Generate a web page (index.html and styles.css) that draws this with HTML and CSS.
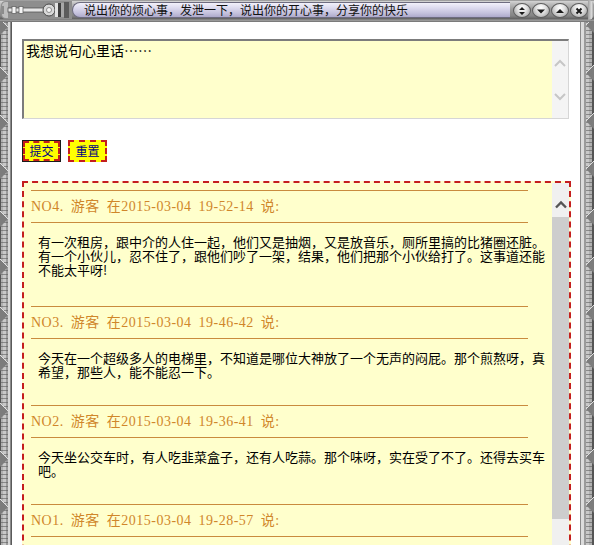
FILE: index.html
```html
<!DOCTYPE html>
<html lang="zh-CN">
<head>
<meta charset="utf-8">
<title>留言板</title>
<link rel="stylesheet" href="styles.css">
</head>
<body>
<div class="window">
  <div class="titlebar">
    <svg class="ornament" width="72" height="20" viewBox="0 0 72 20">
      <path d="M6 1 H72 V19 H6 Q1 19 1 14 V6 Q1 1 6 1 Z" fill="#8e8e8e"/>
      <path d="M6 2 Q2 2 2 6 V14 Q2 18 6 18 H8 V2 Z" fill="#bdbdbd"/>
      <path d="M3 6 V14" stroke="#5a5a5a" stroke-width="1"/>
      <rect x="8" y="8" width="38" height="4" fill="#e6e6e6" stroke="#555" stroke-width="0.8"/>
      <rect x="12" y="6.5" width="4" height="7" fill="#f4f4f4" stroke="#666" stroke-width="0.8"/>
      <rect x="19" y="6.5" width="4" height="7" fill="#f4f4f4" stroke="#666" stroke-width="0.8"/>
      <circle cx="49" cy="10" r="6" fill="#d8d8d8" stroke="#4a4a4a" stroke-width="1"/>
      <circle cx="49" cy="10" r="2.5" fill="#f6f6f6" stroke="#777" stroke-width="0.8"/>
      <rect x="55" y="3" width="3" height="14" fill="#e2e2e2"/>
      <rect x="58" y="3" width="3" height="14" fill="#3e3e3e"/>
      <rect x="61" y="3" width="3" height="14" fill="#a8a8a8"/>
      <rect x="64" y="2" width="5" height="16" fill="#5c5c5c"/>
    </svg>
    <div class="caption">说出你的烦心事，发泄一下，说出你的开心事，分享你的快乐</div>
    <div class="controls">
      <span class="ctl"><svg width="10" height="10" viewBox="0 0 10 10"><path d="M5 1 L8 4 H2 Z M5 9 L8 6 H2 Z" fill="#1a1a1a"/></svg></span>
      <span class="ctl"><svg width="10" height="10" viewBox="0 0 10 10"><path d="M1 3.5 H9 L5 7.5 Z" fill="#1a1a1a"/></svg></span>
      <span class="ctl"><svg width="10" height="10" viewBox="0 0 10 10"><path d="M1 7 H9 L5 3 Z" fill="#1a1a1a"/></svg></span>
      <span class="ctl"><svg width="10" height="10" viewBox="0 0 10 10"><path d="M2.5 2.5 L7.5 7.5 M7.5 2.5 L2.5 7.5" stroke="#1a1a1a" stroke-width="2"/></svg></span>
    </div>
    <span class="endcap"></span>
  </div>

  <div class="frame">
    <svg class="side side-left" width="12" height="523" viewBox="0 0 12 523">
      <defs>
        <pattern id="grilleL" width="12" height="4" patternUnits="userSpaceOnUse">
          <rect x="0" y="0" width="8" height="1" fill="#555" opacity="0.55"/>
        </pattern>
        <pattern id="notchL" width="12" height="48" y="45" patternUnits="userSpaceOnUse">
          <polygon points="0,0 8,8 0,16" fill="#7c7c7c"/>
          <polyline points="0,0 8,8" stroke="#e0e0e0" stroke-width="1" fill="none"/>
        </pattern>
      </defs>
      <rect x="0" y="0" width="1" height="523" fill="#555"/>
      <rect x="1" y="0" width="2" height="523" fill="#b0b0b0"/>
      <rect x="3" y="0" width="3" height="523" fill="#c8c8c8"/>
      <rect x="6" y="0" width="2" height="523" fill="#9a9a9a"/>
      <rect x="8" y="0" width="2" height="523" fill="#d8d8d8"/>
      <rect x="10" y="0" width="1" height="523" fill="#8a8a8a"/>
      <rect x="11" y="0" width="1" height="523" fill="#5a5a5a"/>
      <rect x="0" y="0" width="12" height="523" fill="url(#grilleL)"/>
      <rect x="0" y="0" width="12" height="523" fill="url(#notchL)"/>
    </svg>

    <div class="client">
      <div class="input-box">
        <textarea class="input">我想说句心里话……</textarea>
        <div class="vscroll">
          <svg class="chev chev-up" width="12" height="8" viewBox="0 0 12 8"><path d="M1 7 L6 2 L11 7" fill="none" stroke="#c6c6c6" stroke-width="2"/></svg>
          <svg class="chev chev-down" width="12" height="8" viewBox="0 0 12 8"><path d="M1 1 L6 6 L11 1" fill="none" stroke="#c6c6c6" stroke-width="2"/></svg>
        </div>
      </div>

      <div class="actions">
        <button class="btn btn-focus" type="button"><span class="btn-face">提交</span></button>
        <button class="btn" type="button"><span class="btn-face">重置</span></button>
      </div>

      <div class="board">
        <div class="messages">
          <div class="entry">
            <div class="entry-head">NO4. 游客 在2015-03-04 19-52-14 说:</div>
            <p class="entry-text entry-text-long">有一次租房，跟中介的人住一起，他们又是抽烟，又是放音乐，厕所里搞的比猪圈还脏。<br>有一个小伙儿，忍不住了，跟他们吵了一架，结果，他们把那个小伙给打了。这事道还能<br>不能太平呀!</p>
          </div>
          <div class="entry">
            <div class="entry-head">NO3. 游客 在2015-03-04 19-46-42 说:</div>
            <p class="entry-text">今天在一个超级多人的电梯里，不知道是哪位大神放了一个无声的闷屁。那个煎熬呀，真<br>希望，那些人，能不能忍一下。</p>
          </div>
          <div class="entry">
            <div class="entry-head">NO2. 游客 在2015-03-04 19-36-41 说:</div>
            <p class="entry-text">今天坐公交车时，有人吃韭菜盒子，还有人吃蒜。那个味呀，实在受了不了。还得去买车<br>吧。</p>
          </div>
          <div class="entry">
            <div class="entry-head">NO1. 游客 在2015-03-04 19-28-57 说:</div>
          </div>
        </div>
        <div class="board-scroll">
          <div class="sb-btn">
            <svg width="12" height="9" viewBox="0 0 12 9"><path d="M1 7.5 L6 2.5 L11 7.5" fill="none" stroke="#555" stroke-width="2.4"/></svg>
          </div>
          <div class="sb-thumb"></div>
          <div class="sb-track"></div>
        </div>
      </div>
    </div>

    <svg class="side side-right" width="14" height="523" viewBox="0 0 14 523">
      <defs>
        <pattern id="grilleR" width="14" height="4" patternUnits="userSpaceOnUse">
          <rect x="6" y="0" width="8" height="1" fill="#555" opacity="0.55"/>
        </pattern>
        <pattern id="notchR" width="14" height="48" y="43" patternUnits="userSpaceOnUse">
          <polygon points="14,0 6,8 14,16" fill="#7c7c7c"/>
          <polyline points="14,0 6,8" stroke="#e0e0e0" stroke-width="1" fill="none"/>
        </pattern>
      </defs>
      <rect x="0" y="0" width="1" height="523" fill="#8a8a8a"/>
      <rect x="1" y="0" width="3" height="523" fill="#dcdcdc"/>
      <rect x="4" y="0" width="2" height="523" fill="#9a9a9a"/>
      <rect x="6" y="0" width="3" height="523" fill="#c8c8c8"/>
      <rect x="9" y="0" width="3" height="523" fill="#b0b0b0"/>
      <rect x="12" y="0" width="2" height="523" fill="#555"/>
      <rect x="0" y="0" width="14" height="523" fill="url(#grilleR)"/>
      <rect x="0" y="0" width="14" height="523" fill="url(#notchR)"/>
    </svg>
  </div>
</div>
</body>
</html>
```

FILE: styles.css
```css
html, body {
  margin: 0;
  padding: 0;
  width: 594px;
  height: 545px;
  overflow: hidden;
  background: #ffffff;
}

body {
  font-family: "Noto Sans CJK SC", "DejaVu Sans", sans-serif;
  color: #000;
}

.window {
  width: 594px;
  height: 545px;
  display: flex;
  flex-direction: column;
  overflow: hidden;
}

/* ---------- title bar ---------- */
.titlebar {
  flex: none;
  height: 22px;
  display: flex;
  align-items: flex-start;
  background: linear-gradient(to bottom,
    #6a6a6a 0, #d4d4d4 1px, #bcbcbc 4px, #979797 10px,
    #838383 16px, #606060 19px, #a4a4a4 20px, #8c8c8c 21px, #6a6a6a 22px);
}

.ornament {
  flex: none;
  display: block;
}

.caption {
  flex: 1;
  margin: 2px 3px 0 0;
  height: 16px;
  box-sizing: border-box;
  padding-left: 11px;
  border: 1px solid #6e6c80;
  border-right: 0;
  border-radius: 8px 0 0 8px;
  background: linear-gradient(to bottom, #f2f1fa 0, #dcdaee 35%, #c6c3de 70%, #aeaacb 100%);
  font-size: 12px;
  line-height: 14px;
  color: #111;
  white-space: nowrap;
  overflow: hidden;
}

.controls {
  flex: none;
  display: flex;
  gap: 1px;
  margin-top: 3px;
}

.ctl {
  width: 18px;
  height: 15px;
  box-sizing: border-box;
  border-radius: 50%;
  border: 1px solid #5e5e5e;
  background: radial-gradient(ellipse at 50% 30%, #ffffff 0, #e2e2e2 40%, #a8a8a8 85%, #8a8a8a 100%);
  display: flex;
  align-items: center;
  justify-content: center;
}

.ctl svg {
  display: block;
}

.endcap {
  flex: none;
  width: 6px;
  height: 20px;
  border-radius: 0 6px 6px 0;
  background: linear-gradient(to right, #a0a0a0, #dadada 60%, #8a8a8a);
}

/* ---------- frame ---------- */
.frame {
  flex: 1;
  display: flex;
  min-height: 0;
}

.side {
  flex: none;
  display: block;
}

.client {
  flex: 1;
  min-width: 0;
  padding: 17px 0 0 10px;
  overflow: hidden;
  background: #ffffff;
}

/* ---------- input ---------- */
.input-box {
  width: 547px;
  height: 80px;
  box-sizing: border-box;
  display: flex;
  border-top: 2px solid #7c7c7c;
  border-left: 2px solid #7c7c7c;
  border-right: 1px solid #d6d6d6;
  border-bottom: 1px solid #d6d6d6;
  background: #ffffcc;
}

.input {
  flex: 1;
  min-width: 0;
  margin: 0;
  border: 0;
  padding: 1px 2px;
  background: #ffffcc;
  font-family: "Noto Sans CJK SC", sans-serif;
  font-size: 14px;
  line-height: 16px;
  color: #000;
  resize: none;
  outline: none;
  overflow: hidden;
}

.vscroll {
  flex: none;
  width: 16px;
  background: #f4f4f4;
  display: flex;
  flex-direction: column;
  align-items: center;
  padding-top: 18px;
  box-sizing: border-box;
}

.chev {
  display: block;
}

.chev-down {
  margin-top: 26px;
}

/* ---------- buttons ---------- */
.actions {
  display: flex;
  gap: 7px;
  margin-top: 21px;
}

.btn {
  width: 39px;
  height: 22px;
  padding: 0;
  margin: 0;
  border: 0;
  background: transparent;
  box-sizing: border-box;
  font-family: "Noto Sans CJK SC", sans-serif;
  cursor: pointer;
}

.btn-face {
  display: flex;
  align-items: center;
  justify-content: center;
  width: 100%;
  height: 100%;
  box-sizing: border-box;
  border: 2px dashed #c41e1e;
  background: #ffff00;
  color: #000080;
  font-size: 12px;
  line-height: 14px;
}

.btn-focus {
  border: 1px solid #1a1a1a;
}

/* ---------- message board ---------- */
.board {
  margin-top: 19px;
  width: 549px;
  height: 400px;
  box-sizing: border-box;
  border: 2px dashed #c41e1e;
  background: #ffffcc;
  display: flex;
}

.messages {
  flex: 1;
  min-width: 0;
  padding: 7px 0 0 7px;
  overflow: hidden;
}

.entry {
  width: 497px;
}

.entry-head {
  border-top: 1px solid #c98b3e;
  border-bottom: 1px solid #c98b3e;
  padding: 8px 0 7px;
  font-family: "Liberation Serif", "Noto Sans CJK SC", serif;
  font-size: 14px;
  line-height: 16px;
  letter-spacing: 0.5px;
  word-spacing: 3px;
  color: #d0862a;
  white-space: nowrap;
}

.entry-text {
  margin: 12px 0 26px 7px;
  width: 520px;
  font-size: 13px;
  line-height: 14px;
  white-space: nowrap;
  color: #000;
}

.entry-text-long {
  margin-bottom: 29px;
}

.board-scroll {
  flex: none;
  width: 17px;
  display: flex;
  flex-direction: column;
}

.sb-btn {
  flex: none;
  height: 34px;
  box-sizing: border-box;
  padding-top: 17px;
  background: #f0f0f0;
  display: flex;
  justify-content: center;
}

.sb-btn svg {
  display: block;
}

.sb-thumb {
  flex: none;
  height: 302px;
  background: #cdcdcd;
}

.sb-track {
  flex: 1;
  background: #f0f0f0;
}
```
